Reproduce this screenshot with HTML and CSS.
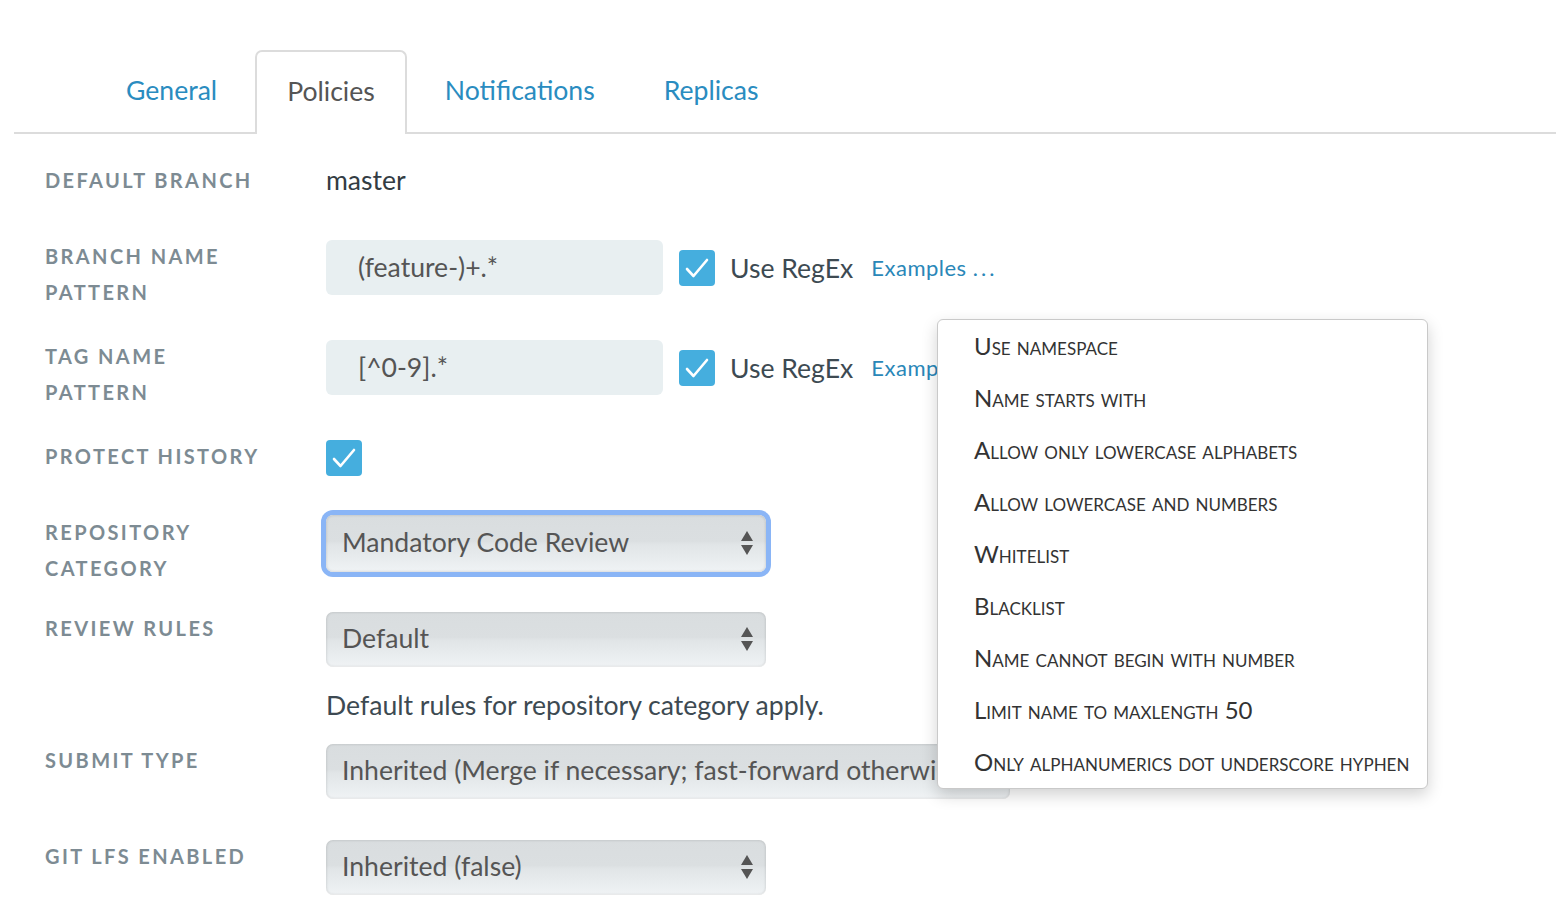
FILE: index.html
```html
<!DOCTYPE html>
<html>
<head>
<meta charset="utf-8">
<link rel="stylesheet" href="styles.css">
</head>
<body>
<div class="page">
  <nav class="tabs">
    <a class="tab">General</a>
    <a class="tab active">Policies</a>
    <a class="tab">Notifications</a>
    <a class="tab">Replicas</a>
  </nav>

  <div class="form">
    <div class="row row-default">
      <div class="label">Default branch</div>
      <div class="value">master</div>
    </div>

    <div class="row row-pattern">
      <div class="label">Branch name<br>pattern</div>
      <div class="control inline">
        <div class="input">(feature-)+.*</div>
        <span class="check"><svg viewBox="0 0 36 36" width="36" height="36"><path d="M8 19 L14.5 26 L28 10" fill="none" stroke="#fff" stroke-width="2.6" stroke-linecap="round" stroke-linejoin="round"/></svg></span>
        <span class="check-label">Use RegEx</span>
        <a class="examples">Examples <span class="dots">...</span></a>
      </div>
    </div>

    <div class="row row-pattern">
      <div class="label">Tag name<br>pattern</div>
      <div class="control inline">
        <div class="input">[^0-9].*</div>
        <span class="check"><svg viewBox="0 0 36 36" width="36" height="36"><path d="M8 19 L14.5 26 L28 10" fill="none" stroke="#fff" stroke-width="2.6" stroke-linecap="round" stroke-linejoin="round"/></svg></span>
        <span class="check-label">Use RegEx</span>
        <a class="examples">Examples <span class="dots">...</span></a>
      </div>
    </div>

    <div class="row row-protect">
      <div class="label">Protect history</div>
      <div class="control">
        <span class="check solo"><svg viewBox="0 0 36 36" width="36" height="36"><path d="M8 19 L14.5 26 L28 10" fill="none" stroke="#fff" stroke-width="2.6" stroke-linecap="round" stroke-linejoin="round"/></svg></span>
      </div>
    </div>

    <div class="row row-category">
      <div class="label">Repository<br>category</div>
      <div class="control">
        <div class="select focused">Mandatory Code Review<span class="arrows"><i class="up"></i><i class="down"></i></span></div>
      </div>
    </div>

    <div class="row row-review">
      <div class="label">Review rules</div>
      <div class="control">
        <div class="select">Default<span class="arrows"><i class="up"></i><i class="down"></i></span></div>
        <div class="hint">Default rules for repository category apply.</div>
      </div>
    </div>

    <div class="row row-submit">
      <div class="label">Submit type</div>
      <div class="control">
        <div class="select wide">Inherited (Merge if necessary; fast-forward otherwise)<span class="arrows"><i class="up"></i><i class="down"></i></span></div>
      </div>
    </div>

    <div class="row row-lfs">
      <div class="label">Git LFS enabled</div>
      <div class="control">
        <div class="select">Inherited (false)<span class="arrows"><i class="up"></i><i class="down"></i></span></div>
      </div>
    </div>
  </div>

  <ul class="menu">
    <li>Use namespace</li>
    <li>Name starts with</li>
    <li>Allow only lowercase alphabets</li>
    <li>Allow lowercase and numbers</li>
    <li>Whitelist</li>
    <li>Blacklist</li>
    <li>Name cannot begin with number</li>
    <li>Limit name to maxlength 50</li>
    <li>Only alphanumerics dot underscore hyphen</li>
  </ul>
</div>
</body>
</html>
```

FILE: styles.css
```css
html, body {
  margin: 0;
  padding: 0;
  background: #fff;
}
body {
  font-family: Lato, "Open Sans", "Liberation Sans", sans-serif;
  color: #333c43;
  width: 1556px;
  height: 920px;
  overflow: hidden;
}
.page {
  position: relative;
  height: 920px;
}

/* tabs */
.tabs {
  display: flex;
  margin-left: 14px;
  padding-top: 50px;
  padding-left: 81px;
  border-bottom: 2px solid #dcdcdc;
  height: 82px;
}
.tab {
  display: block;
  box-sizing: border-box;
  height: 82px;
  line-height: 80px;
  padding: 0 31px;
  margin-right: 7px;
  font-size: 26.6px;
  color: #2a8cc0;
}
.tab.active {
  color: #555;
  background: #fff;
  border: 2px solid #dcdcdc;
  border-bottom: none;
  padding: 0 30px;
  line-height: 78px;
  border-radius: 7px 7px 0 0;
  height: 84px;
  margin-bottom: -2px;
}

/* form */
.form {
  padding: 28px 0 0 45px;
}
.row {
  display: flex;
  align-items: flex-start;
}
.label {
  width: 281px;
  flex: none;
  font-size: 20px;
  line-height: 36px;
  font-weight: 700;
  letter-spacing: 2.4px;
  text-transform: uppercase;
  color: #7d8b93;
}
.value {
  font-size: 26.6px;
  line-height: 36px;
  color: #333c43;
}
.control.inline {
  display: flex;
  align-items: center;
  margin-top: 2px;
}
.input {
  box-sizing: border-box;
  width: 337px;
  height: 55px;
  line-height: 55px;
  padding-left: 32px;
  background: #e8eff1;
  border-radius: 6px;
  font-size: 26.6px;
  color: #555;
}
.check {
  display: block;
  width: 36px;
  height: 36px;
  border-radius: 4px;
  background: #45aede;
  margin-left: 16px;
}
.check svg { display: block; }
.check.solo {
  margin: 2px 0 0 0;
}
.check-label {
  margin-left: 15px;
  font-size: 26.6px;
  color: #3d4a52;
}
.examples {
  margin-left: 18px;
  font-size: 22px;
  letter-spacing: 0.5px;
  color: #2a87b8;
}
.examples .dots {
  letter-spacing: 3px;
}

.row-default { margin-bottom: 40px; }
.row-pattern { height: 72px; margin-bottom: 28px; }
.row-protect { height: 38px; margin-bottom: 34px; }
.row-category { height: 76px; margin-bottom: 24px; }
.row-category .label { margin-top: 4px; }
.row-category .control { margin-top: 5px; }
.row-review .control { margin-top: 2px; }
.row-review { margin-bottom: 19px; }
.row-submit { height: 57px; margin-bottom: 39px; }
.row-submit .control, .row-lfs .control { margin-top: 2px; }

.hint {
  margin-top: 20px;
  font-size: 26.6px;
  line-height: 36px;
  color: #3d4a52;
}

.select {
  position: relative;
  box-sizing: border-box;
  width: 440px;
  height: 55px;
  line-height: 53px;
  padding-left: 16px;
  border-radius: 7px;
  font-size: 26.6px;
  color: #555;
  white-space: nowrap;
  overflow: hidden;
  background: linear-gradient(#d9dddf 0%, #dbdfe1 46%, #e1e5e7 52%, #e9edef 80%, #f0f3f5 100%);
  box-shadow: inset 0 0 3px rgba(0,0,0,0.18), inset 0 -1px 0 rgba(255,255,255,0.6);
}
.select.wide { width: 684px; }
.select.focused {
  height: 57px;
  line-height: 55px;
  box-shadow: inset 0 0 3px rgba(0,0,0,0.18), 0 0 0 5px #8ab5f6;
}
.arrows {
  position: absolute;
  right: 13px;
  top: 15px;
  width: 12px;
  height: 26px;
}
.select.focused .arrows { top: 16px; }
.arrows i {
  position: absolute;
  left: 0;
  width: 0;
  height: 0;
  border-left: 6px solid transparent;
  border-right: 6px solid transparent;
}
.arrows .up { top: 0; border-bottom: 10px solid #555; }
.arrows .down { bottom: 2px; border-top: 10px solid #555; }

/* dropdown menu */
.menu {
  position: absolute;
  left: 937px;
  top: 319px;
  box-sizing: border-box;
  width: 491px;
  height: 470px;
  margin: 0;
  padding: 0 0 0 36px;
  list-style: none;
  background: #fff;
  border: 1px solid #c9c9c9;
  border-radius: 6px;
  box-shadow: 0 6px 16px rgba(0,0,0,0.18);
}
.menu li {
  height: 52px;
  line-height: 52px;
  font-size: 24px;
  font-variant: small-caps;
  color: #333;
  white-space: nowrap;
}
```
